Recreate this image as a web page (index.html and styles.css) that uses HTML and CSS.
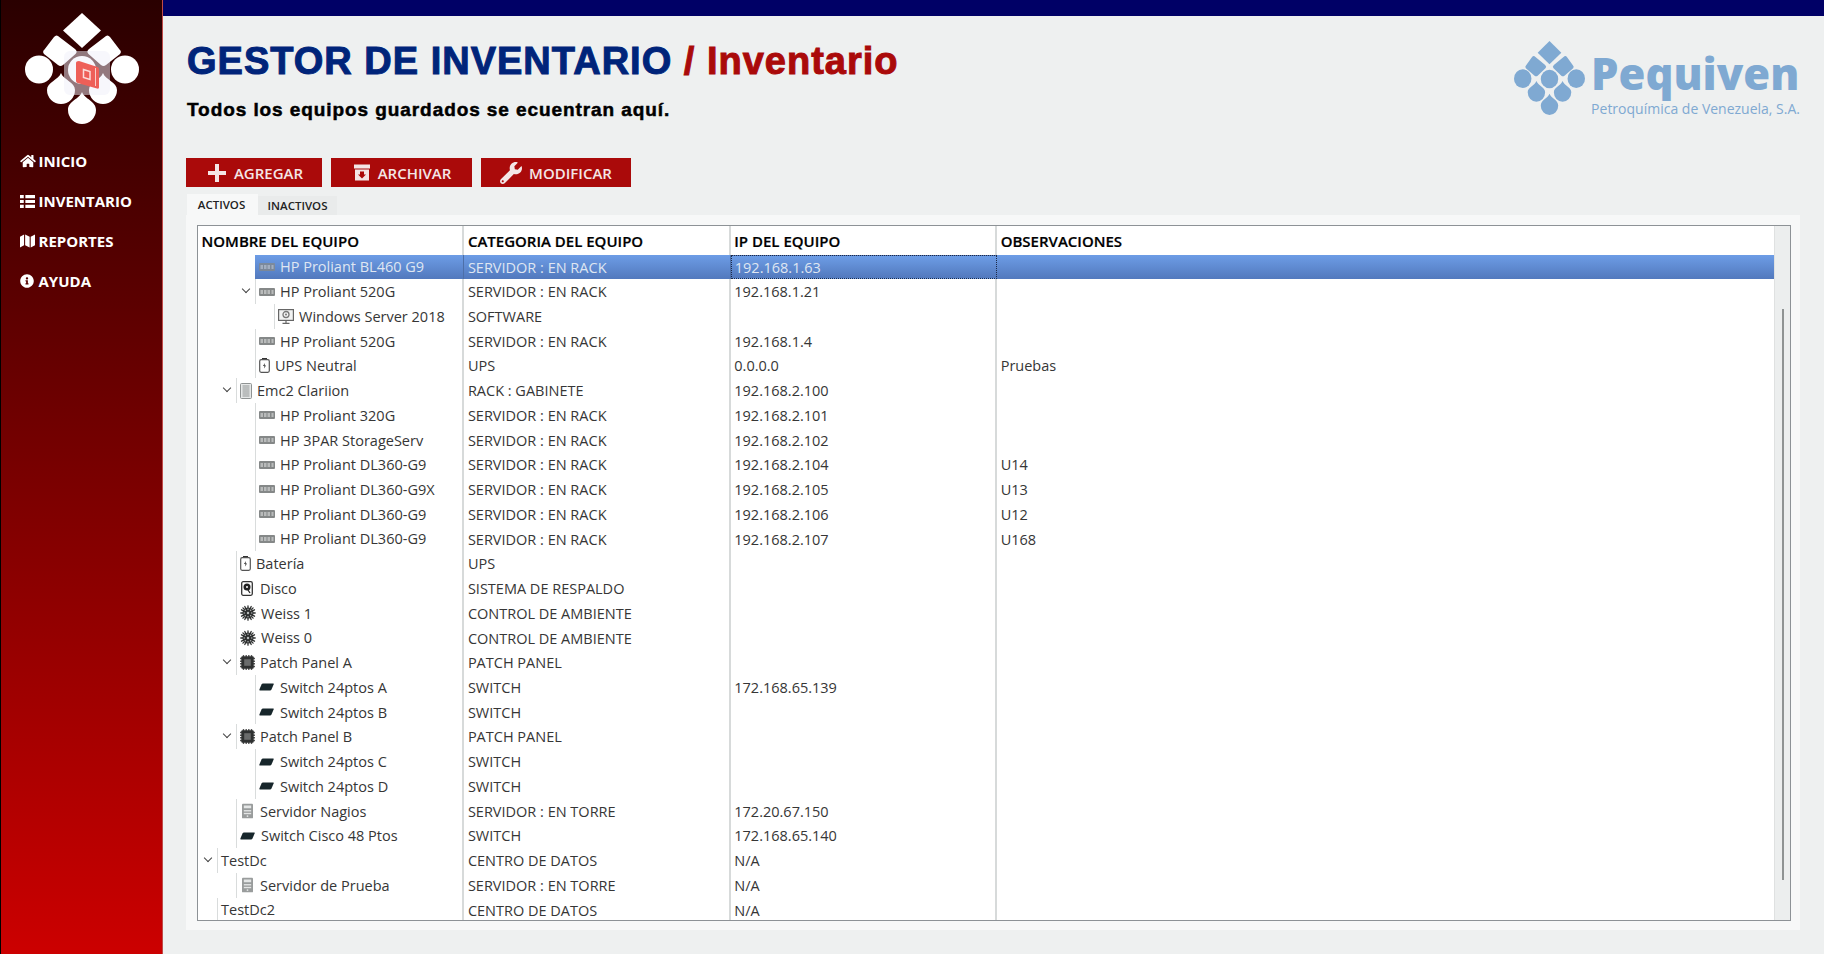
FILE: index.html
```html
<!DOCTYPE html>
<html lang="es">
<head>
    <meta charset="UTF-8">
    <meta name="viewport" content="width=device-width, initial-scale=1.0">
    <title>Gestor de Inventario</title>
    <link rel="stylesheet" href="styles.css">
</head>
<body>
    <!-- Shared icons -->
    <svg class="defs" width="0" height="0" aria-hidden="true">
        <symbol id="i-logo" viewBox="0 0 114 111" preserveAspectRatio="none">
            <path d="M57 0 76 17.500 57 35 38 17.500Z"/>
            <path d="M33 23 50 36Q53 38.500 50.500 41L38 52Q35.500 54 33 52L19 41Q17 38.500 19.500 36.500L29 24Q31 21.500 33 23Z"/>
            <path d="M81 23 64 36Q61 38.500 63.500 41L76 52Q78.500 54 81 52L95 41Q97 38.500 94.500 36.500L85 24Q83 21.500 81 23Z"/>
            <circle cx="14" cy="56.500" r="14"/>
            <circle cx="57" cy="57" r="14"/>
            <circle cx="100" cy="56.500" r="14"/>
            <path d="M36 60C38.500 67 50 69 50 77A14 14 0 0 1 22 77C22 69 33.500 67 36 60Z"/>
            <path d="M78 60C80.500 67 92 69 92 77A14 14 0 0 1 64 77C64 69 75.500 67 78 60Z"/>
            <path d="M57 79C59.500 86 71 88 71 97A14 14 0 0 1 43 97C43 88 54.500 86 57 79Z"/>
        </symbol>
        <symbol id="i-rack" viewBox="0 0 16 8">
            <rect width="16" height="8" rx="1" fill="#858888"/>
            <rect x="1.500" y="2" width="2.500" height="4" fill="#b9bbbb"/>
            <rect x="5" y="2" width="2.500" height="4" fill="#b9bbbb"/>
            <rect x="8.500" y="2" width="2.500" height="4" fill="#b9bbbb"/>
            <rect x="12.500" y="2" width="2" height="4" fill="#b9bbbb"/>
        </symbol>
        <symbol id="i-ups" viewBox="0 0 11 15">
            <rect x="3" y="0" width="5" height="2" fill="#333"/>
            <rect x=".7" y="1.700" width="9.600" height="12.600" rx="1.500" fill="#fff" stroke="#555" stroke-width="1.200"/>
            <path d="M6 5 4 8H5.500L5 10.500 7 7.500H5.500Z" fill="#222"/>
        </symbol>
        <symbol id="i-tower" viewBox="0 0 12 16">
            <rect width="12" height="16" rx="1" fill="#999c9c"/>
            <rect x="2" y="2" width="8" height="3" fill="#e4e6e6"/>
            <rect x="2" y="7" width="8" height="1.500" fill="#e4e6e6"/>
            <rect x="2" y="10" width="8" height="1.500" fill="#e4e6e6"/>
            <circle cx="6" cy="13.500" r="1" fill="#e4e6e6"/>
        </symbol>
        <symbol id="i-rackcab" viewBox="0 0 12 16">
            <rect x=".5" y=".5" width="11" height="15" rx="1" fill="#e6e8e8" stroke="#8f9393"/>
            <path d="M2.500 3H9.500M2.500 5H9.500M2.500 7H9.500M2.500 9H9.500M2.500 11H9.500M2.500 13H9.500" stroke="#8f9393"/>
        </symbol>
        <symbol id="i-disk" viewBox="0 0 12 15">
            <rect x=".7" y=".7" width="10.600" height="13.600" rx="1.500" fill="#fff" stroke="#333" stroke-width="1.300"/>
            <circle cx="6" cy="6" r="3.500" fill="#222"/>
            <circle cx="6" cy="6" r="1" fill="#fff"/>
            <path d="M7 9 9 12" stroke="#222" stroke-width="1.300"/>
        </symbol>
        <symbol id="i-fan" viewBox="0 0 16 16">
            <circle cx="8" cy="8" r="5.500" fill="#2e3030"/>
            <path d="M8 .8V15.200M.8 8H15.200M2.900 2.900 13.100 13.100M13.100 2.900 2.900 13.100M4.800 1.500 11.200 14.500M11.200 1.500 4.800 14.500M1.500 4.800 14.500 11.200M14.500 4.800 1.500 11.200" stroke="#2e3030" stroke-width="1.300" stroke-linecap="round"/>
            <g fill="#b9bcbc">
                <circle cx="8" cy="8" r="1.200"/>
                <circle cx="8" cy="4.200" r=".7"/>
                <circle cx="8" cy="11.800" r=".7"/>
                <circle cx="4.200" cy="8" r=".7"/>
                <circle cx="11.800" cy="8" r=".7"/>
                <circle cx="5.300" cy="5.300" r=".7"/>
                <circle cx="10.700" cy="5.300" r=".7"/>
                <circle cx="5.300" cy="10.700" r=".7"/>
                <circle cx="10.700" cy="10.700" r=".7"/>
            </g>
        </symbol>
        <symbol id="i-chip" viewBox="0 0 15 15">
            <path d="M3.500 0V15M6.200 0V15M8.800 0V15M11.500 0V15M0 3.500H15M0 6.200H15M0 8.800H15M0 11.500H15" stroke="#555" stroke-width="1.400"/>
            <rect x="1.300" y="1.300" width="12.400" height="12.400" rx="1" fill="#2f3131"/>
            <rect x="4.200" y="4.200" width="6.600" height="6.600" fill="#6a6c6c"/>
        </symbol>
        <symbol id="i-switch" viewBox="0 0 15 8">
            <path d="M4 .5H14.300Q15 .5 14.700 1.300L12.500 6.600Q12 7.500 11 7.500H1Q0 7.500 .4 6.400L2.500 1.500Q3 .5 4 .5Z" fill="#17262b"/>
        </symbol>
        <symbol id="i-monitor" viewBox="0 0 16 15">
            <rect x=".6" y=".6" width="14.800" height="10.800" fill="#f2f3f3" stroke="#666" stroke-width="1.200"/>
            <circle cx="8" cy="5.500" r="3" fill="none" stroke="#777" stroke-width="1.300"/>
            <circle cx="8" cy="5.500" r="1" fill="#777"/>
            <path d="M8 11.500V14M4.500 14.300H11.500" stroke="#666" stroke-width="1.200"/>
        </symbol>
    </svg>

    <div class="layout">
        <aside class="sidebar">
            <div class="side-logo">
                <svg class="side-logo-mark" width="114" height="111"><use href="#i-logo"/></svg>
                <div class="side-logo-veil"></div>
                <svg class="side-logo-book" viewBox="0 0 23 28" width="23" height="28">
                    <path d="M3 0 21.500 6Q23 6.500 23 8V26.500Q23 28 21 27.500L1.500 22Q0 21.500 0 20V2Q0 0 3 0Z" fill="#ee5f58"/>
                    <path d="M19.500 7V25" stroke="#f9cdc9" stroke-width="1"/>
                    <path d="M7.500 8.500 14 10.500V18.500L7.500 16.500Z" fill="none" stroke="#fbdcd9" stroke-width="1.500"/>
                </svg>
            </div>
            <nav class="side-nav">
                <a class="side-link" href="#">
                    <svg viewBox="0 0 576 512" width="16" height="14"><path d="M280.37 148.26L96 300.11V464a16 16 0 0 0 16 16l112.06-.29a16 16 0 0 0 15.92-16V368a16 16 0 0 1 16-16h64a16 16 0 0 1 16 16v95.64a16 16 0 0 0 16 16.05L464 480a16 16 0 0 0 16-16V300L295.67 148.26a12.19 12.19 0 0 0-15.3 0zM571.6 251.47L488 182.56V44.05a12 12 0 0 0-12-12h-56a12 12 0 0 0-12 12v72.61L318.47 43a48 48 0 0 0-61 0L4.34 251.47a12 12 0 0 0-1.6 16.9l25.5 31A12 12 0 0 0 45.15 301l235.22-193.74a12.19 12.19 0 0 1 15.3 0L530.9 301a12 12 0 0 0 16.9-1.6l25.5-31a12 12 0 0 0-1.7-16.93z"/></svg>
                    <span>INICIO</span>
                </a>
                <a class="side-link" href="#">
                    <svg viewBox="0 0 14 12" width="15" height="13"><path d="M0 0H3.500V3H0ZM5 0H14V3H5ZM0 4.500H3.500V7.500H0ZM5 4.500H14V7.500H5ZM0 9H3.500V12H0ZM5 9H14V12H5Z"/></svg>
                    <span>INVENTARIO</span>
                </a>
                <a class="side-link" href="#">
                    <svg viewBox="0 0 14 13" width="15" height="14"><path d="M0 2.500 3.800 .5V10.500L0 12.500ZM4.800 .5 9 2.500V12.500L4.800 10.500ZM10 2.500 14 .5V10.500L10 12.500Z"/></svg>
                    <span>REPORTES</span>
                </a>
                <a class="side-link" href="#">
                    <svg viewBox="0 0 512 512" width="14" height="14"><path d="M256 8C119 8 8 119 8 256s111 248 248 248 248-111 248-248S393 8 256 8zm0 110c23.2 0 42 18.8 42 42s-18.8 42-42 42-42-18.8-42-42 18.8-42 42-42zm56 254c0 6.6-5.4 12-12 12h-88c-6.6 0-12-5.4-12-12v-24c0-6.6 5.4-12 12-12h12v-64h-12c-6.6 0-12-5.4-12-12v-24c0-6.6 5.4-12 12-12h64c6.6 0 12 5.4 12 12v100h12c6.6 0 12 5.4 12 12v24z"/></svg>
                    <span>AYUDA</span>
                </a>
            </nav>
        </aside>

        <main class="main">
            <div class="top-bar"></div>

            <header class="page-head">
                <div>
                    <h1 class="page-title">GESTOR DE INVENTARIO <span class="page-title-sub">/ Inventario</span></h1>
                    <p class="page-text">Todos los equipos guardados se ecuentran aquí.</p>
                </div>
                <div class="brand">
                    <svg class="brand-mark" width="71" height="74"><use href="#i-logo"/></svg>
                    <div>
                        <div class="brand-name">Pequiven</div>
                        <div class="brand-sub">Petroquímica de Venezuela, S.A.</div>
                    </div>
                </div>
            </header>

            <div class="toolbar">
                <button class="btn">
                    <svg viewBox="0 0 20 20" width="20" height="20"><path d="M8 1H12V8H19V12H12V19H8V12H1V8H8Z"/></svg>
                    AGREGAR
                </button>
                <button class="btn">
                    <svg viewBox="0 0 16 16" width="16" height="17"><path d="M0 0H16V4H0ZM1 5H15V16H1ZM6 7V10H4L8 14 12 10H10V7Z" fill-rule="evenodd"/></svg>
                    ARCHIVAR
                </button>
                <button class="btn">
                    <svg viewBox="0 0 512 512" width="22" height="22"><path d="M507.73 109.1c-2.24-9.03-13.54-12.09-20.12-5.51l-74.36 74.36-67.88-11.31-11.31-67.88 74.36-74.36c6.62-6.62 3.43-17.9-5.66-20.16-47.38-11.74-99.55.91-136.58 37.93-39.64 39.64-50.55 97.1-34.05 147.2L18.74 402.76c-24.99 24.99-24.99 65.51 0 90.5 24.99 24.99 65.51 24.99 90.5 0l213.21-213.21c50.12 16.71 107.47 5.68 147.37-34.22 37.07-37.07 49.7-89.32 37.91-136.73zM64 472c-13.25 0-24-10.75-24-24 0-13.26 10.75-24 24-24s24 10.74 24 24c0 13.25-10.75 24-24 24z"/></svg>
                    MODIFICAR
                </button>
            </div>

            <div class="tabs">
                <div class="tab tab-active">ACTIVOS</div>
                <div class="tab">INACTIVOS</div>
            </div>

            <section class="panel">
                <div class="tree">
                    <div class="tree-body">
                        <div class="row row-head">
                            <div class="cell">NOMBRE DEL EQUIPO</div>
                            <div class="cell">CATEGORIA DEL EQUIPO</div>
                            <div class="cell">IP DEL EQUIPO</div>
                            <div class="cell cell-wide">OBSERVACIONES</div>
                        </div>

                        <div class="row row-selected">
                            <div class="cell"><div class="node lv3"><svg class="ic ic-rack"><use href="#i-rack"/></svg>HP Proliant BL460 G9</div></div>
                            <div class="cell">SERVIDOR : EN RACK</div>
                            <div class="cell cell-focus">192.168.1.63</div>
                            <div class="cell cell-wide"></div>
                        </div>
                        <div class="row">
                            <div class="cell"><span class="arrow arrow-3"></span><div class="node lv3"><svg class="ic ic-rack"><use href="#i-rack"/></svg>HP Proliant 520G</div></div>
                            <div class="cell">SERVIDOR : EN RACK</div>
                            <div class="cell">192.168.1.21</div>
                            <div class="cell cell-wide"></div>
                        </div>
                        <div class="row">
                            <div class="cell"><div class="node lv4"><svg class="ic ic-monitor"><use href="#i-monitor"/></svg>Windows Server 2018</div></div>
                            <div class="cell">SOFTWARE</div>
                            <div class="cell"></div>
                            <div class="cell cell-wide"></div>
                        </div>
                        <div class="row">
                            <div class="cell"><div class="node lv3"><svg class="ic ic-rack"><use href="#i-rack"/></svg>HP Proliant 520G</div></div>
                            <div class="cell">SERVIDOR : EN RACK</div>
                            <div class="cell">192.168.1.4</div>
                            <div class="cell cell-wide"></div>
                        </div>
                        <div class="row">
                            <div class="cell"><div class="node lv3"><svg class="ic ic-ups"><use href="#i-ups"/></svg>UPS Neutral</div></div>
                            <div class="cell">UPS</div>
                            <div class="cell">0.0.0.0</div>
                            <div class="cell cell-wide">Pruebas</div>
                        </div>
                        <div class="row">
                            <div class="cell"><span class="arrow arrow-2"></span><div class="node lv2"><svg class="ic ic-cabinet"><use href="#i-rackcab"/></svg>Emc2 Clariion</div></div>
                            <div class="cell">RACK : GABINETE</div>
                            <div class="cell">192.168.2.100</div>
                            <div class="cell cell-wide"></div>
                        </div>
                        <div class="row">
                            <div class="cell"><div class="node lv3"><svg class="ic ic-rack"><use href="#i-rack"/></svg>HP Proliant 320G</div></div>
                            <div class="cell">SERVIDOR : EN RACK</div>
                            <div class="cell">192.168.2.101</div>
                            <div class="cell cell-wide"></div>
                        </div>
                        <div class="row">
                            <div class="cell"><div class="node lv3"><svg class="ic ic-rack"><use href="#i-rack"/></svg>HP 3PAR StorageServ</div></div>
                            <div class="cell">SERVIDOR : EN RACK</div>
                            <div class="cell">192.168.2.102</div>
                            <div class="cell cell-wide"></div>
                        </div>
                        <div class="row">
                            <div class="cell"><div class="node lv3"><svg class="ic ic-rack"><use href="#i-rack"/></svg>HP Proliant DL360-G9</div></div>
                            <div class="cell">SERVIDOR : EN RACK</div>
                            <div class="cell">192.168.2.104</div>
                            <div class="cell cell-wide">U14</div>
                        </div>
                        <div class="row">
                            <div class="cell"><div class="node lv3"><svg class="ic ic-rack"><use href="#i-rack"/></svg>HP Proliant DL360-G9X</div></div>
                            <div class="cell">SERVIDOR : EN RACK</div>
                            <div class="cell">192.168.2.105</div>
                            <div class="cell cell-wide">U13</div>
                        </div>
                        <div class="row">
                            <div class="cell"><div class="node lv3"><svg class="ic ic-rack"><use href="#i-rack"/></svg>HP Proliant DL360-G9</div></div>
                            <div class="cell">SERVIDOR : EN RACK</div>
                            <div class="cell">192.168.2.106</div>
                            <div class="cell cell-wide">U12</div>
                        </div>
                        <div class="row">
                            <div class="cell"><div class="node lv3"><svg class="ic ic-rack"><use href="#i-rack"/></svg>HP Proliant DL360-G9</div></div>
                            <div class="cell">SERVIDOR : EN RACK</div>
                            <div class="cell">192.168.2.107</div>
                            <div class="cell cell-wide">U168</div>
                        </div>
                        <div class="row">
                            <div class="cell"><div class="node lv2"><svg class="ic ic-ups"><use href="#i-ups"/></svg>Batería</div></div>
                            <div class="cell">UPS</div>
                            <div class="cell"></div>
                            <div class="cell cell-wide"></div>
                        </div>
                        <div class="row">
                            <div class="cell"><div class="node lv2"><svg class="ic ic-disk"><use href="#i-disk"/></svg>Disco</div></div>
                            <div class="cell">SISTEMA DE RESPALDO</div>
                            <div class="cell"></div>
                            <div class="cell cell-wide"></div>
                        </div>
                        <div class="row">
                            <div class="cell"><div class="node lv2"><svg class="ic ic-fan"><use href="#i-fan"/></svg>Weiss 1</div></div>
                            <div class="cell">CONTROL DE AMBIENTE</div>
                            <div class="cell"></div>
                            <div class="cell cell-wide"></div>
                        </div>
                        <div class="row">
                            <div class="cell"><div class="node lv2"><svg class="ic ic-fan"><use href="#i-fan"/></svg>Weiss 0</div></div>
                            <div class="cell">CONTROL DE AMBIENTE</div>
                            <div class="cell"></div>
                            <div class="cell cell-wide"></div>
                        </div>
                        <div class="row">
                            <div class="cell"><span class="arrow arrow-2"></span><div class="node lv2"><svg class="ic ic-chip"><use href="#i-chip"/></svg>Patch Panel A</div></div>
                            <div class="cell">PATCH PANEL</div>
                            <div class="cell"></div>
                            <div class="cell cell-wide"></div>
                        </div>
                        <div class="row">
                            <div class="cell"><div class="node lv3"><svg class="ic ic-switch"><use href="#i-switch"/></svg>Switch 24ptos A</div></div>
                            <div class="cell">SWITCH</div>
                            <div class="cell">172.168.65.139</div>
                            <div class="cell cell-wide"></div>
                        </div>
                        <div class="row">
                            <div class="cell"><div class="node lv3"><svg class="ic ic-switch"><use href="#i-switch"/></svg>Switch 24ptos B</div></div>
                            <div class="cell">SWITCH</div>
                            <div class="cell"></div>
                            <div class="cell cell-wide"></div>
                        </div>
                        <div class="row">
                            <div class="cell"><span class="arrow arrow-2"></span><div class="node lv2"><svg class="ic ic-chip"><use href="#i-chip"/></svg>Patch Panel B</div></div>
                            <div class="cell">PATCH PANEL</div>
                            <div class="cell"></div>
                            <div class="cell cell-wide"></div>
                        </div>
                        <div class="row">
                            <div class="cell"><div class="node lv3"><svg class="ic ic-switch"><use href="#i-switch"/></svg>Switch 24ptos C</div></div>
                            <div class="cell">SWITCH</div>
                            <div class="cell"></div>
                            <div class="cell cell-wide"></div>
                        </div>
                        <div class="row">
                            <div class="cell"><div class="node lv3"><svg class="ic ic-switch"><use href="#i-switch"/></svg>Switch 24ptos D</div></div>
                            <div class="cell">SWITCH</div>
                            <div class="cell"></div>
                            <div class="cell cell-wide"></div>
                        </div>
                        <div class="row">
                            <div class="cell"><div class="node lv2"><svg class="ic ic-tower"><use href="#i-tower"/></svg>Servidor Nagios</div></div>
                            <div class="cell">SERVIDOR : EN TORRE</div>
                            <div class="cell">172.20.67.150</div>
                            <div class="cell cell-wide"></div>
                        </div>
                        <div class="row">
                            <div class="cell"><div class="node lv2"><svg class="ic ic-switch"><use href="#i-switch"/></svg>Switch Cisco 48 Ptos</div></div>
                            <div class="cell">SWITCH</div>
                            <div class="cell">172.168.65.140</div>
                            <div class="cell cell-wide"></div>
                        </div>
                        <div class="row">
                            <div class="cell"><span class="arrow arrow-1"></span><div class="node lv1">TestDc</div></div>
                            <div class="cell">CENTRO DE DATOS</div>
                            <div class="cell">N/A</div>
                            <div class="cell cell-wide"></div>
                        </div>
                        <div class="row">
                            <div class="cell"><div class="node lv2"><svg class="ic ic-tower"><use href="#i-tower"/></svg>Servidor de Prueba</div></div>
                            <div class="cell">SERVIDOR : EN TORRE</div>
                            <div class="cell">N/A</div>
                            <div class="cell cell-wide"></div>
                        </div>
                        <div class="row">
                            <div class="cell"><div class="node lv1">TestDc2</div></div>
                            <div class="cell">CENTRO DE DATOS</div>
                            <div class="cell">N/A</div>
                            <div class="cell cell-wide"></div>
                        </div>
                    </div>
                    <div class="scroll-track"><div class="scroll-thumb"></div></div>
                </div>
            </section>
        </main>
    </div>
</body>
</html>
```

FILE: styles.css
```css
* {
    margin: 0;
    padding: 0;
    box-sizing: border-box;
}

body {
    background-color: #eef0f0;
    font-family: "Open Sans", "Noto Sans", sans-serif;
    color: #333;
    overflow: hidden;
}

.defs {
    position: absolute;
}

.layout {
    display: flex;
    height: 954px;
}

/* Sidebar */
.sidebar {
    width: 163px;
    flex-shrink: 0;
    border-left: 1px solid #000;
    border-right: 1px solid #c04a48;
    background: linear-gradient(to bottom, #2a0000 0%, #5c0000 32%, #cc0000 100%);
}

.side-logo {
    position: relative;
    width: 114px;
    height: 111px;
    margin: 13px 0 0 24px;
    color: white;
}

.side-logo-mark {
    display: block;
    fill: currentColor;
}

.side-logo-veil {
    position: absolute;
    left: 39px;
    top: 38px;
    width: 46px;
    height: 44px;
    border-radius: 6px;
    background: rgba(240, 240, 250, 0.5);
}

.side-logo-book {
    position: absolute;
    left: 51px;
    top: 48px;
}

.side-nav {
    margin-top: 17px;
    padding-left: 18.500px;
}

.side-link {
    display: grid;
    grid-template-columns: 19px auto;
    justify-content: start;
    align-items: center;
    height: 40px;
    color: white;
    font-size: 15px;
    font-weight: 700;
    text-decoration: none;
}

.side-link svg {
    fill: white;
}

/* Main */
.main {
    flex: 1;
    min-width: 0;
}

.top-bar {
    height: 16px;
    background-color: #000066;
}

.page-head {
    display: flex;
    justify-content: space-between;
    height: 142px;
    padding: 23px 24px 0 24px;
}

.page-title {
    font-family: "Liberation Sans", Arial, sans-serif;
    font-size: 38px;
    font-weight: 700;
    line-height: 44px;
    color: #00247a;
    letter-spacing: 1px;
    -webkit-text-stroke: 1px currentColor;
}

.page-title-sub {
    color: #aa0a0a;
}

.page-text {
    margin-top: 16px;
    font-family: "Liberation Sans", Arial, sans-serif;
    font-size: 19px;
    font-weight: 700;
    line-height: 22px;
    color: black;
    letter-spacing: 0.92px;
    -webkit-text-stroke: 0.5px currentColor;
}

.brand {
    display: flex;
    gap: 6px;
    color: #7fa9d2;
    padding-top: 2px;
}

.brand-mark {
    fill: currentColor;
}

.brand-name {
    font-size: 43.500px;
    font-weight: 800;
    line-height: 50px;
    margin-top: 8px;
}

.brand-sub {
    font-size: 14px;
    line-height: 20px;
}

/* Toolbar */
.toolbar {
    display: flex;
    gap: 9px;
    padding-left: 23px;
}

.btn {
    display: flex;
    align-items: center;
    justify-content: center;
    gap: 7px;
    height: 29px;
    border: none;
    background-color: #aa0a0a;
    color: #f4e6e6;
    font-family: "Open Sans", sans-serif;
    font-size: 15px;
    font-weight: 600;
}

.btn:nth-child(1) {
    width: 136px;
    padding-left: 2px;
}

.btn:nth-child(2) {
    width: 141px;
    padding-left: 2px;
    gap: 8px;
}

.btn:nth-child(3) {
    width: 150px;
}

.btn svg {
    fill: #f4e6e6;
}

/* Tabs */
.tabs {
    display: flex;
    align-items: flex-end;
    height: 28px;
    padding: 7px 0 0 24px;
}

.tab {
    height: 19px;
    width: 79px;
    background-color: #e9ebeb;
    font-size: 11.500px;
    font-weight: 600;
    line-height: 19px;
    color: #222;
    text-align: center;
}

.tab-active {
    height: 21px;
    width: 71px;
    line-height: 22px;
    background-color: #f7f8f8;
    padding-right: 2px;
}

/* Tree */
.panel {
    width: 1614px;
    height: 715px;
    margin-left: 23px;
    padding: 10px 9px 9px 11px;
    background-color: #f7f8f8;
}

.tree {
    display: flex;
    height: 696px;
    border: 1.500px solid #8d9296;
    background-color: white;
    overflow: hidden;
}

.tree-body {
    flex: 1;
    min-width: 0;
}

.row {
    display: flex;
    height: 24.740px;
    font-size: 14.500px;
    line-height: 25px;
    color: #363636;
}

.row-head {
    height: 28.500px;
    font-size: 15px;
    font-weight: 600;
    color: black;
    line-height: 31px;
    -webkit-text-stroke: 0.2px currentColor;
}

.cell {
    position: relative;
    width: 266.400px;
    flex-shrink: 0;
    padding-left: 3.500px;
    border-right: 2px solid #d7dada;
    white-space: nowrap;
}

.cell-wide {
    flex: 1;
    border-right: none;
}

.node {
    display: flex;
    align-items: center;
    height: 100%;
    padding-left: 3px;
    border-left: 1px solid #d9dcdc;
}

.lv1 {
    margin-left: 15.500px;
}

.lv2 {
    margin-left: 34.500px;
}

.lv3 {
    margin-left: 53.500px;
}

.lv4 {
    margin-left: 72.500px;
}

.ic {
    flex-shrink: 0;
    margin-right: 5px;
}

.ic-rack {
    width: 16px;
    height: 8px;
}

.ic-ups {
    width: 11px;
    height: 15px;
}

.ic-cabinet {
    width: 12px;
    height: 16px;
}

.ic-tower {
    width: 11px;
    height: 16px;
    margin-left: 2px;
    margin-right: 7px;
}

.ic-disk {
    width: 12px;
    height: 15px;
    margin-left: 1px;
    margin-right: 7px;
}

.ic-fan {
    width: 16px;
    height: 16px;
}

.ic-chip {
    width: 15px;
    height: 15px;
}

.ic-switch {
    width: 15px;
    height: 8px;
    margin-right: 6px;
}

.ic-monitor {
    width: 16px;
    height: 15px;
}

.arrow {
    position: absolute;
    top: 7px;
    width: 6px;
    height: 6px;
    border-right: 1.500px solid #444;
    border-bottom: 1.500px solid #444;
    transform: rotate(45deg);
}

.arrow-1 {
    left: 6.500px;
}

.arrow-2 {
    left: 25.500px;
}

.arrow-3 {
    left: 44.500px;
}

/* Selected row */
.row-selected {
    color: #dfe6f2;
}

.row-selected .ic {
    opacity: 0.75;
}

.row-selected .cell {
    border-right: 1px solid #4d6fa8;
}

.row-selected .node {
    border-left: none;
    padding-left: 4px;
    background: linear-gradient(to bottom, #6d9de6, #5279bd);
}

.row-selected .cell:not(:first-child) {
    background: linear-gradient(to bottom, #6d9de6, #5279bd);
}

.row-selected .cell-wide {
    border-right: none;
}

.row-selected .cell-focus {
    border: 1px dotted #1c2a48;
    padding-left: 3px;
    line-height: 23px;
}

.scroll-track {
    display: flex;
    justify-content: center;
    width: 16px;
    flex-shrink: 0;
    padding-top: 83px;
    background-color: #eceeee;
    border-left: 1px solid #dfe1e1;
}

.scroll-thumb {
    width: 2px;
    height: 571px;
    background-color: #8f9393;
}
```
